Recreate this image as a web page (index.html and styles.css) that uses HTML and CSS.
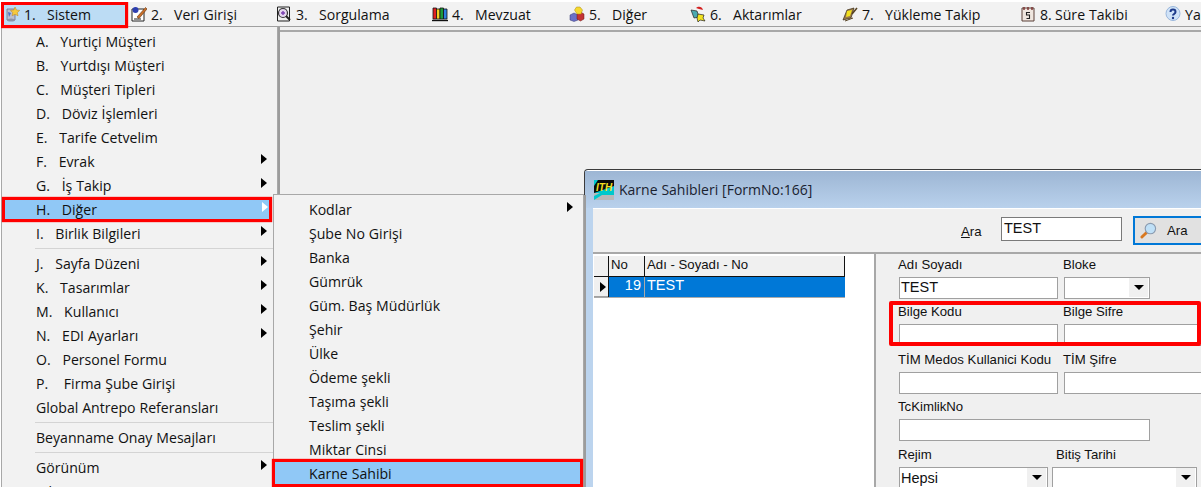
FILE: index.html
```html
<!DOCTYPE html>
<html lang="tr">
<head>
<meta charset="utf-8">
<title>Karne Sahibleri</title>
<link rel="stylesheet" href="styles.css">
</head>
<body>
<div class="screen">
  <nav class="menubar">
    <div class="bar-item active">
      <svg class="ico ico-first" viewBox="0 0 16 16"><path d="M2 3h8v11H2z" fill="#b9bfd0" stroke="#6b7088" stroke-width=".8"/><ellipse cx="6" cy="14" rx="4" ry="1.600" fill="#8d93a8"/><path d="M10 1l1.500 3 3.200.4-2.300 2.200.6 3.200-3-1.500-2.800 1.500.5-3.200L5.500 4.400 8.800 4z" fill="#f6c93c" stroke="#b9851a" stroke-width=".5"/><path d="M3 6l3 1-2 4z" fill="#4c6fc4"/></svg>
      <span class="num">1.</span><span>Sistem</span>
    </div>
    <div class="bar-item">
      <svg class="ico" viewBox="0 0 16 16"><path d="M1 3h12v12H1z" fill="#fff" stroke="#222"/><path d="M3 13h7" stroke="#222"/><circle cx="4.500" cy="4" r="3" fill="#2d3fb0"/><path d="M6 11L14.500 1.500 16 3 8 12.500z" fill="#c9702a" stroke="#5e2f0c" stroke-width=".6"/></svg>
      <span class="num">2.</span><span>Veri Girişi</span>
    </div>
    <div class="bar-item">
      <svg class="ico" viewBox="0 0 16 16"><path d="M1.500 1h12v14h-12z" fill="#eee" stroke="#222"/><circle cx="7" cy="7" r="4.500" fill="#e4d6ee" stroke="#333" stroke-width="1.200"/><path d="M5 7h4M7 5v4" stroke="#7a3fb0" stroke-width="1.400"/><path d="M10 10l4 4" stroke="#222" stroke-width="2"/></svg>
      <span class="num">3.</span><span>Sorgulama</span>
    </div>
    <div class="bar-item">
      <svg class="ico" viewBox="0 0 16 16"><path d="M1 2h3.500v11H1z" fill="#e02020" stroke="#111" stroke-width=".8"/><path d="M4.500 3H8v10H4.500z" fill="#f2d020" stroke="#111" stroke-width=".8"/><path d="M8 2h3.500v11H8z" fill="#1f9a3a" stroke="#111" stroke-width=".8"/><path d="M11.500 3H15v10h-3.500z" fill="#2f7fe0" stroke="#111" stroke-width=".8"/><path d="M0 14.500h16" stroke="#111" stroke-width="1.400"/></svg>
      <span class="num">4.</span><span>Mevzuat</span>
    </div>
    <div class="bar-item">
      <svg class="ico" viewBox="0 0 16 16"><path d="M1 9l4-2 4 2v5l-4 1.500L1 14z" fill="#6a70c8" stroke="#33356e" stroke-width=".5"/><path d="M8 8l3.500-2L15 8v5l-3.500 2L8 13z" fill="#c43434" stroke="#6e1818" stroke-width=".5"/><path d="M7.500 1h3.500l2.500 3-1.500 4H8L5.500 4z" fill="#f6d82e" stroke="#a78a10" stroke-width=".5"/></svg>
      <span class="num">5.</span><span>Diğer</span>
    </div>
    <div class="bar-item">
      <svg class="ico" viewBox="0 0 16 16"><path d="M1 4l6 1 2 6-5 1z" fill="#4aa9b0" stroke="#222" stroke-width=".7"/><path d="M6 2c2-2 6-2 7 2L9 3z" fill="#d42020"/><path d="M8 8l6 1-1 3 2 3-5-1-2 2-1-4z" fill="#f2e21e" stroke="#222" stroke-width=".7"/></svg>
      <span class="num">6.</span><span>Aktarımlar</span>
    </div>
    <div class="bar-item">
      <svg class="ico" viewBox="0 0 16 16"><path d="M1 14L5 4l7-2-3 10z" fill="#9a7a4a" stroke="#3a2a12" stroke-width=".7"/><path d="M5 5l5-1-2 6-4 1z" fill="#f2e01e"/><path d="M10 8l5-6" stroke="#54401f" stroke-width="1.500"/><path d="M3 15l8-3" stroke="#54401f"/></svg>
      <span class="num">7.</span><span>Yükleme Takip</span>
    </div>
    <div class="bar-item">
      <svg class="ico" viewBox="0 0 16 16"><path d="M2 2h12v13H2z" fill="#efe6df" stroke="#5a4038"/><path d="M4 1v3M8 1v3M12 1v3" stroke="#7a2d2d" stroke-width="1.400"/><path d="M10 6.500H6.500V9H9.500V12.500H6.500" fill="none" stroke="#222" stroke-width="1.100"/></svg>
      <span class="num-tight">8.</span><span>Süre Takibi</span>
    </div>
    <div class="bar-item">
      <svg class="ico" viewBox="0 0 16 16"><circle cx="8" cy="7.500" r="7" fill="#cfe2f7" stroke="#9ab7dc"/><path d="M5.500 6c0-3.300 5-3.300 5 0 0 2-2.500 2-2.500 3.500" fill="none" stroke="#1d3a8a" stroke-width="2"/><circle cx="8" cy="12" r="1.200" fill="#1d3a8a"/></svg>
      <span>Yardım</span>
    </div>
  </nav>
  <div class="bar-rule"></div>

  <section class="window">
    <header class="titlebar">
      <svg class="logo" viewBox="0 0 20 20"><rect width="20" height="20" fill="#00c8cc"/><rect y="13" width="20" height="7" fill="#b8b8b8"/><path d="M0 13L20 6v-6H4L0 6z" fill="#0a0a0a"/><path d="M0 20l8-5h12v-2H6L0 16z" fill="#00c8cc"/><text x="2" y="11" class="logo-text">ITH</text></svg>
      <span class="title-text">Karne Sahibleri [FormNo:166]</span>
    </header>
    <div class="client">
      <div class="toolbar">
        <span class="ara-label"><u>A</u>ra</span>
        <div class="input ara-input">TEST</div>
        <button class="ara-btn" type="button">
          <svg class="lens" viewBox="0 0 18 18"><path d="M2 16l5-5" stroke="#d9781f" stroke-width="3" stroke-linecap="round"/><circle cx="11" cy="7" r="5.500" fill="#bfe0f7" stroke="#8a9bb0" stroke-width="1.200"/></svg>
          <span>Ara</span>
        </button>
      </div>
      <div class="panes">
        <div class="list">
          <div class="grid-row grid-head">
            <div class="cell-ind"></div>
            <div class="cell-no">No</div>
            <div class="cell-name">Adı - Soyadı - No</div>
          </div>
          <div class="grid-row grid-sel">
            <div class="cell-ind"><span class="caret-right"></span></div>
            <div class="cell-no num-cell">19</div>
            <div class="cell-name">TEST</div>
          </div>
        </div>
        <div class="form">
          <div class="form-row">
            <div class="field w159"><label>Adı Soyadı</label><div class="input">TEST</div></div>
            <div class="field w86"><label>Bloke</label><div class="input combo"><span class="drop"><i></i></span></div></div>
          </div>
          <div class="form-row marked">
            <div class="field w159"><label>Bilge Kodu</label><div class="input"></div></div>
            <div class="field wrest"><label>Bilge Sifre</label><div class="input"></div></div>
            <div class="red-box"></div>
          </div>
          <div class="form-row">
            <div class="field w159"><label>TİM Medos Kullanici Kodu</label><div class="input"></div></div>
            <div class="field wrest"><label>TİM Şifre</label><div class="input"></div></div>
          </div>
          <div class="form-row">
            <div class="field w251"><label>TcKimlikNo</label><div class="input"></div></div>
          </div>
          <div class="form-row tight">
            <div class="field w149"><label>Rejim</label><div class="input combo">Hepsi<span class="drop"><i></i></span></div></div>
            <div class="field w145"><label class="lab-in">Bitiş Tarihi</label><div class="input combo"><span class="drop"><i></i></span></div></div>
          </div>
        </div>
      </div>
    </div>
  </section>

  <div class="menu main-menu">
    <div class="mi">A.   Yurtiçi Müşteri</div>
    <div class="mi">B.   Yurtdışı Müşteri</div>
    <div class="mi">C.   Müşteri Tipleri</div>
    <div class="mi">D.   Döviz İşlemleri</div>
    <div class="mi">E.   Tarife Cetvelim</div>
    <div class="mi has-sub">F.   Evrak</div>
    <div class="mi has-sub">G.   İş Takip</div>
    <div class="mi has-sub selected">H.   Diğer</div>
    <div class="mi has-sub">I.   Birlik Bilgileri</div>
    <div class="sep"></div>
    <div class="mi has-sub">J.   Sayfa Düzeni</div>
    <div class="mi has-sub">K.   Tasarımlar</div>
    <div class="mi has-sub">M.   Kullanıcı</div>
    <div class="mi has-sub">N.   EDI Ayarları</div>
    <div class="mi">O.   Personel Formu</div>
    <div class="mi">P.    Firma Şube Girişi</div>
    <div class="mi">Global Antrepo Referansları</div>
    <div class="sep"></div>
    <div class="mi">Beyanname Onay Mesajları</div>
    <div class="sep"></div>
    <div class="mi has-sub">Görünüm</div>
    <div class="mi">Çıkış</div>
  </div>

  <div class="menu sub-menu">
    <div class="mi has-sub">Kodlar</div>
    <div class="mi">Şube No Girişi</div>
    <div class="mi">Banka</div>
    <div class="mi">Gümrük</div>
    <div class="mi">Güm. Baş Müdürlük</div>
    <div class="mi">Şehir</div>
    <div class="mi">Ülke</div>
    <div class="mi">Ödeme şekli</div>
    <div class="mi">Taşıma şekli</div>
    <div class="mi">Teslim şekli</div>
    <div class="mi">Miktar Cinsi</div>
    <div class="mi selected">Karne Sahibi</div>
  </div>
</div>
</body>
</html>
```
FILE: styles.css
```css
* , *::before, *::after { box-sizing: border-box; }
html, body { margin: 0; padding: 0; background: #fff; }
.screen {
  position: relative;
  width: 1200px;
  height: 485px;
  margin: 2px 0 0 1px;
  overflow: hidden;
  background: #f0f0f0;
  font-family: "Open Sans", "Noto Sans", sans-serif;
  font-size: 14.1px;
  word-spacing: .25px;
  color: #111;
}

/* Menu bar */
.menubar {
  position: relative;
  z-index: 4;
  display: grid;
  grid-template-columns: 127px 145px 156px 137px 121px 152px 178px 145px 40px;
  height: 25px;
  padding-left: 3px;
  background: #f2f2f2;
  border-bottom: 1px solid #a0a0a0;
}
.bar-item {
  position: relative;
  display: flex;
  align-items: center;
  height: 24px;
  white-space: nowrap;
}
.ico { width: 16px; height: 16px; margin-right: 4px; flex: none; }
.ico-first { margin-left: 1px; margin-right: 3px; }
.num { width: 23px; flex: none; }
.num-tight { width: 15px; flex: none; }
.bar-item.active::before {
  content: "";
  position: absolute;
  left: -3px;
  top: 0;
  width: 127px;
  height: 26px;
  background: #bcdcf4;
  border: 3px solid #f00;
  box-shadow: 0 0 1px #f00;
}
.bar-item.active > * { position: relative; }
.bar-rule { height: 5px; border-bottom: 2px solid #a8a8a8; }

/* Drop-down menus */
.menu {
  position: absolute;
  background: #f2f2f2;
  border: 1px solid #a8a8a8;
  box-shadow: 2px 1px 0 #9c9c9c;
}
.main-menu { left: 0; top: 24px; width: 277px; height: 480px; z-index: 2; padding-top: 3px; }
.sub-menu { left: 272px; top: 192px; width: 311px; height: 300px; z-index: 3; padding-top: 3px; }
.mi {
  position: relative;
  height: 24px;
  line-height: 23px;
  padding-left: 34px;
  white-space: pre;
}
.sub-menu .mi { padding-left: 35px; }
.sep { height: 6px; margin-left: 33px; background: linear-gradient(#d4d4d4, #d4d4d4) 0 2px / 100% 1px no-repeat; }
.has-sub::after {
  content: "";
  position: absolute;
  right: 10px;
  top: 4px;
  border-left: 6px solid #000;
  border-top: 5px solid transparent;
  border-bottom: 5px solid transparent;
}
.mi.selected {
  background: #90c8f6;
  box-shadow: 0 0 0 3px #f00 inset, 0 0 1px #f00;
}
.main-menu .selected { margin: -1px 5px 0 0; height: 25px; line-height: 25px; padding-left: 34px; }
.sub-menu .selected { margin: -3px 0 0 -2px; height: 28px; line-height: 30px; padding-left: 37px; width: 311px; }
.selected.has-sub::after { border-left-color: #fff; right: 4px; top: 5px; }

/* Window */
.window {
  position: absolute;
  left: 583px;
  top: 167px;
  width: 640px;
  height: 340px;
  z-index: 1;
  background: #bcd4ee;
  border: 1px solid #3c3c3c;
  border-bottom: 0;
  border-radius: 4px 0 0 0;
  box-shadow: inset 0 1px 0 #fff;
}
.titlebar {
  display: flex;
  align-items: center;
  height: 37px;
  margin-top: 1px;
  padding: 0 0 0 9px;
  background: linear-gradient(#9db6d4, #b9d1ec);
}
.logo { width: 20px; height: 20px; margin-right: 5px; flex: none; }
.logo-text { font: italic bold 10px "Liberation Sans", sans-serif; fill: #f4e020; }
.title-text { font-size: 14px; color: #1a2230; }
.client {
  margin-left: 8px;
  background: #f0f0f0;
  border-top: 1px solid #fff;
  font-family: "Liberation Sans", sans-serif;
  font-size: 13.2px;
  word-spacing: 0;
  color: #111;
}
.toolbar {
  display: flex;
  align-items: center;
  height: 45px;
  padding: 0 0 0 368px;
  border-bottom: 2px solid #a8a8a8;
}
.ara-label { width: 40px; padding-top: 2px; }
.input {
  height: 22px;
  line-height: 19px;
  padding-left: 1px;
  background: #fff;
  border: 1px solid #a0a0a0;
  font-size: 14.5px;
  white-space: nowrap;
}
.ara-input { width: 121px; height: 24px; line-height: 21px; border-color: #7a7a7a; padding-left: 2px; margin: -3px 11px 0 0; }
.ara-btn {
  display: flex;
  align-items: center;
  gap: 10px;
  width: 90px;
  height: 29px;
  padding: 0 0 0 5px;
  background: #e1e1e1;
  border: 2px solid #0078d7;
  font: inherit;
  color: inherit;
}
.lens { width: 17px; height: 17px; flex: none; }
.panes { display: flex; height: 240px; }
.list {
  width: 283px;
  flex: none;
  padding: 2px 0 0 1px;
  background: #fff;
  border-right: 2px solid #a8a8a8;
}
.grid-row { display: flex; width: 251px; height: 21px; }
.cell-ind { width: 15px; flex: none; background: #f0f0f0; border-right: 1px solid #111; display: flex; align-items: center; padding-left: 6px; }
.cell-no { width: 36px; flex: none; padding-left: 2px; border-right: 1px solid #111; line-height: 18px; }
.cell-name { flex: 1; padding-left: 2px; line-height: 18px; }
.grid-head { background: #f0f0f0; border-bottom: 1px solid #111; border-right: 1px solid #111; }
.grid-sel { background: #0078d7; color: #fff; border-bottom: 1px solid #aaa; font-size: 14.5px; }
.grid-sel .cell-no, .grid-sel .cell-name { line-height: 16px; }
.grid-sel .cell-ind { box-shadow: inset 0 -1px 0 #a0a0a0; }
.grid-sel .cell-no { border-right-color: #aaa; }
.num-cell { text-align: right; padding-right: 3px; padding-left: 0; }
.caret-right { border-left: 6px solid #000; border-top: 5px solid transparent; border-bottom: 5px solid transparent; }

/* Form */
.form { flex: 1; padding: 2.900px 0 0 23px; overflow: hidden; }
.form-row { display: flex; gap: 6px; height: 47.500px; position: relative; }
.form-row.tight { gap: 4px; }
.field { flex: none; }
.field label { display: block; height: 20px; line-height: 15px; margin-left: -1px; white-space: nowrap; }
.field .lab-in { margin-left: 4px; }
.w159 { width: 159px; }
.w86 { width: 86px; }
.w251 { width: 251px; }
.w149 { width: 149px; }
.w145 { width: 145px; }
.wrest { width: 140px; }
.combo { position: relative; line-height: 21px; }
.drop { position: absolute; right: 1px; top: 0; width: 19px; height: 19px; background: #f0f0f0; display: flex; align-items: center; justify-content: center; }
.drop i { border-top: 5px solid #000; border-left: 5px solid transparent; border-right: 5px solid transparent; }
.red-box {
  position: absolute;
  left: -10px;
  top: -3px;
  width: 312px;
  height: 45px;
  border: 4px solid #f00;
  border-radius: 2px;
}
```
